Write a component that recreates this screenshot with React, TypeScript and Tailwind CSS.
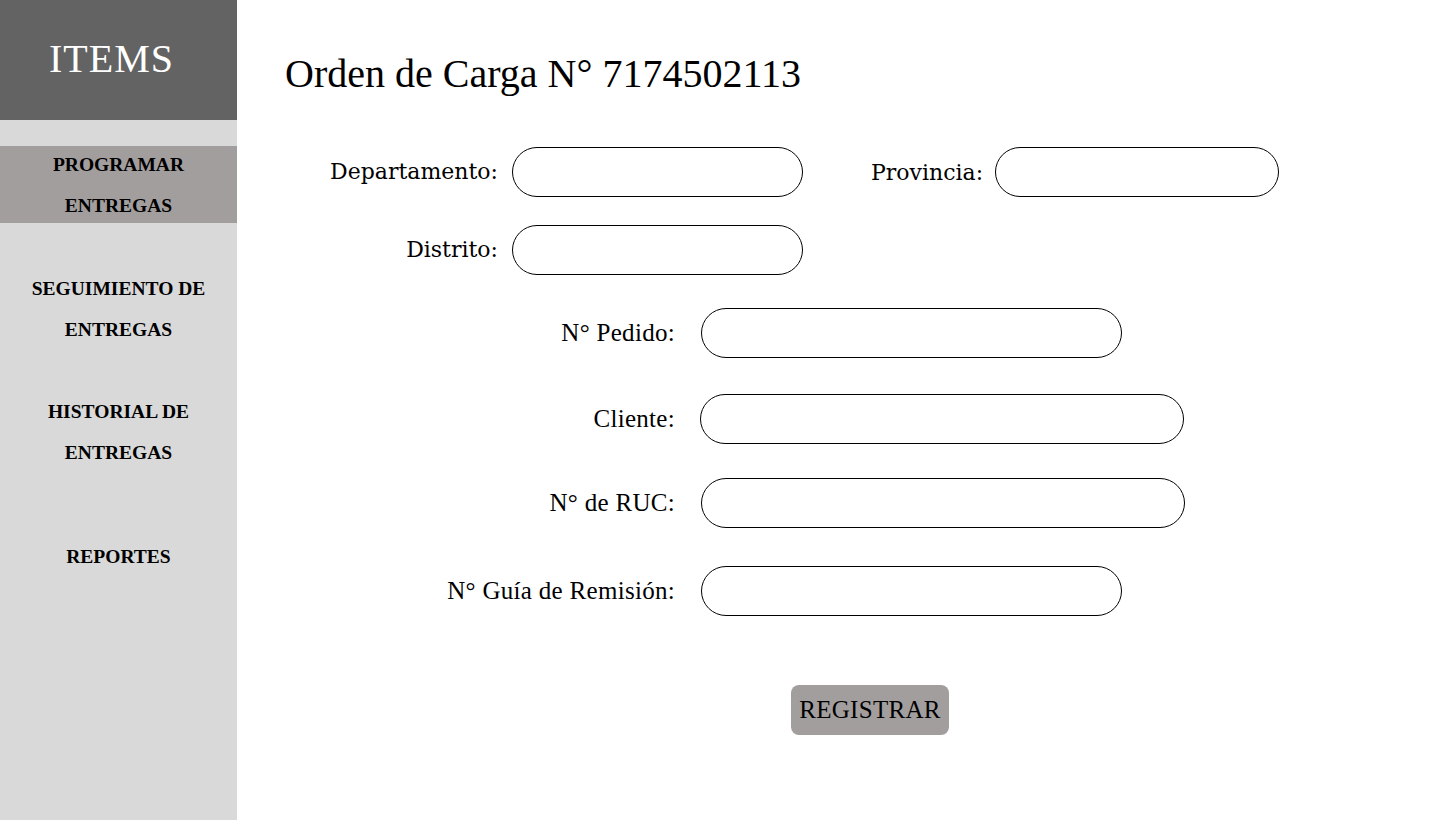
const serif = { fontFamily: '"Liberation Serif", "DejaVu Serif", serif' };

const navItems = [
  { lines: ["PROGRAMAR", "ENTREGAS"], active: true },
  { lines: ["SEGUIMIENTO DE", "ENTREGAS"], active: false },
  { lines: ["HISTORIAL DE", "ENTREGAS"], active: false },
  { lines: ["REPORTES"], active: false },
];

function Field({ label, labelW, labelCls, inputW, gap }: { label: string; labelW: string; labelCls: string; inputW: string; gap: string }) {
  return (
    <div className={`flex items-center ${gap}`}>
      <label className={`${labelW} ${labelCls} text-right text-black`}>{label}</label>
      <div className={`${inputW} h-[50px] rounded-full border border-black bg-white`} />
    </div>
  );
}

const topLabel = "font-['DejaVu_Serif'] text-[22px] leading-[28px]";
const lowLabel = "text-[25px] tracking-[0.3px]";

export default function App() {
  return (
    <div className="flex h-[820px] w-[1440px] bg-white" style={serif}>
      <aside className="flex w-[237px] shrink-0 flex-col bg-[#d9d9d9]">
        <div className="flex h-[120px] items-center justify-center bg-[#636363] pb-[2px] pr-[14px]">
          <span className="text-[40px] tracking-wide text-white">ITEMS</span>
        </div>
        <nav className="mt-[26px] flex flex-col">
          {navItems.map((item, i) => (
            <div
              key={i}
              className={`flex flex-col items-center justify-center text-[19.5px] font-bold leading-[41px] text-black ${
                item.active ? "h-[77px] bg-[#a39e9e]" : ""
              } ${i === 1 ? "mt-[45px]" : ""} ${i === 2 ? "mt-[41px]" : ""} ${i === 3 ? "mt-[63px]" : ""}`}
            >
              {item.lines.map((l) => (
                <span key={l}>{l}</span>
              ))}
            </div>
          ))}
        </nav>
      </aside>

      <main className="flex flex-1 flex-col pl-[48px] pt-[48px]">
        <h1 className="text-[40px] leading-[52px] text-black">Orden de Carga N° 7174502113</h1>

        <div className="mt-[47px] flex items-center">
          <Field label="Departamento:" labelW="w-[213px]" labelCls={topLabel} inputW="w-[291px]" gap="gap-[14px]" />
          <div className="ml-[68px] flex items-center gap-[12px]">
            <label className={`${topLabel} pt-[2px] text-black`}>Provincia:</label>
            <div className="h-[50px] w-[284px] rounded-full border border-black bg-white" />
          </div>
        </div>
        <div className="mt-[28px]">
          <Field label="Distrito:" labelW="w-[213px]" labelCls={topLabel} inputW="w-[291px]" gap="gap-[14px]" />
        </div>

        <div className="mt-[33px]">
          <Field label="N° Pedido:" labelW="w-[390px]" labelCls={lowLabel} inputW="w-[421px]" gap="gap-[26px]" />
        </div>
        <div className="mt-[36px]">
          <Field label="Cliente:" labelW="w-[390px]" labelCls={lowLabel} inputW="w-[484px]" gap="gap-[25px]" />
        </div>
        <div className="mt-[34px]">
          <Field label="N° de RUC:" labelW="w-[390px]" labelCls={lowLabel} inputW="w-[484px]" gap="gap-[26px]" />
        </div>
        <div className="mt-[38px]">
          <Field label="N° Guía de Remisión:" labelW="w-[390px]" labelCls={lowLabel} inputW="w-[421px]" gap="gap-[26px]" />
        </div>

        <div className="mt-[69px] pl-[506px]">
          <button className="h-[50px] w-[158px] rounded-[8px] bg-[#a39e9e] text-[25px] tracking-[0.3px] text-black">
            REGISTRAR
          </button>
        </div>
      </main>
    </div>
  );
}
